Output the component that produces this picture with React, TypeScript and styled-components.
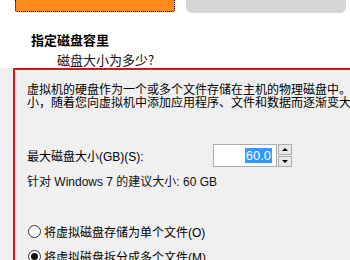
import styled, { createGlobalStyle } from "styled-components";

const Global = createGlobalStyle`
  html, body {
    margin: 0;
    padding: 0;
    background: #ffffff;
    overflow: hidden;
  }
  body {
    width: 350px;
    height: 260px;
    font-family: "Liberation Sans", "Noto Sans CJK SC", sans-serif;
    color: #000;
  }
`;

const Page = styled.div`
  width: 350px;
  height: 260px;
  display: flex;
  flex-direction: column;
  overflow: hidden;
`;

const TopBar = styled.div`
  display: flex;
  align-items: flex-start;
  gap: 11px;
  padding-left: 15px;
  height: 13px;
`;

const Tab = styled.div<{ $active?: boolean }>`
  width: ${(p) => (p.$active ? "158px" : "160px")};
  height: ${(p) => (p.$active ? "11px" : "13px")};
  background: ${(p) => (p.$active ? "#fd8a1d" : "#d5d5d5")};
  border: ${(p) => (p.$active ? "1px dotted #000" : "none")};
  border-top: none;
  border-radius: ${(p) => (p.$active ? "0 0 2px 2px" : "0 0 6px 6px")};
`;

const Header = styled.div`
  height: 66px;
  padding: 19px 0 0 31px;
  box-sizing: border-box;
  border-bottom: 1px solid #a0a0a0;
  background: #fff;
`;

const Title = styled.div`
  font-family: "Noto Sans CJK SC", sans-serif;
  font-weight: bold;
  font-size: 13px;
  line-height: 16px;
`;

const Subtitle = styled.div`
  font-family: "Noto Sans CJK SC", sans-serif;
  font-size: 13px;
  line-height: 16px;
  margin: 4px 0 0 26px;
  color: #111;
`;

const Body = styled.div`
  flex: 1;
  background: #f0f0f0;
  padding-left: 13px;
  margin-top: -1px;
`;

const Panel = styled.div`
  width: 360px;
  height: 200px;
  border: 2px solid #d7141e;
  box-sizing: border-box;
  padding: 14px 0 0 12px;
  font-size: 12px;
`;

const Para = styled.div`
  line-height: 13px;
  white-space: nowrap;
`;

const SizeRow = styled.div`
  display: flex;
  align-items: center;
  margin-top: 34px;
  height: 23px;
`;

const Label = styled.span`
  width: 186px;
`;

const Spinner = styled.div`
  display: flex;
  align-items: stretch;
  gap: 1px;
  height: 23px;
`;

const Input = styled.div`
  width: 64px;
  border: 1px solid #abadb3;
  background: #fff;
  display: flex;
  align-items: center;
  justify-content: flex-end;
  padding-right: 4px;
  box-sizing: border-box;
`;

const Selected = styled.span`
  background: #3399ff;
  color: #fff;
  font-size: 13px;
  line-height: 15px;
  padding: 0 1px;
`;

const Buttons = styled.div`
  display: flex;
  flex-direction: column;
  gap: 1px;
  width: 14px;
`;

const Arrow = styled.div<{ $down?: boolean }>`
  flex: 1;
  border: 1px solid #adadad;
  background: #e8e8e8;
  display: flex;
  align-items: center;
  justify-content: center;
  &::after {
    content: "";
    border-left: 3px solid transparent;
    border-right: 3px solid transparent;
    ${(p) =>
      p.$down
        ? "border-top: 3px solid #000;"
        : "border-bottom: 3px solid #000;"}
  }
`;

const Hint = styled.div`
  margin-top: 8px;
  line-height: 14px;
  color: #111;
`;

const RadioRow = styled.label<{ $first?: boolean }>`
  display: flex;
  align-items: center;
  gap: 3px;
  height: 16px;
  margin-top: ${(p) => (p.$first ? "34px" : "9px")};
  margin-left: 1px;
`;

const Radio = styled.span<{ $checked?: boolean }>`
  width: 13px;
  height: 13px;
  border-radius: 50%;
  border: 1px solid #333;
  background: #fff;
  box-sizing: border-box;
  display: flex;
  align-items: center;
  justify-content: center;
  &::after {
    content: "";
    width: 7px;
    height: 7px;
    border-radius: 50%;
    background: ${(p) => (p.$checked ? "#111" : "transparent")};
  }
`;

export default function App() {
  return (
    <Page>
      <Global />
      <TopBar>
        <Tab $active />
        <Tab />
      </TopBar>
      <Header>
        <Title>指定磁盘容里</Title>
        <Subtitle>磁盘大小为多少?</Subtitle>
      </Header>
      <Body>
        <Panel>
          <Para>虚拟机的硬盘作为一个或多个文件存储在主机的物理磁盘中。</Para>
          <Para>小，随着您向虚拟机中添加应用程序、文件和数据而逐渐变大</Para>
          <SizeRow>
            <Label>最大磁盘大小(GB)(S):</Label>
            <Spinner>
              <Input>
                <Selected>60.0</Selected>
              </Input>
              <Buttons>
                <Arrow />
                <Arrow $down />
              </Buttons>
            </Spinner>
          </SizeRow>
          <Hint>针对 Windows 7 的建议大小: 60 GB</Hint>
          <RadioRow $first>
            <Radio />
            将虚拟磁盘存储为单个文件(O)
          </RadioRow>
          <RadioRow>
            <Radio $checked />
            将虚拟磁盘拆分成多个文件(M)
          </RadioRow>
        </Panel>
      </Body>
    </Page>
  );
}
